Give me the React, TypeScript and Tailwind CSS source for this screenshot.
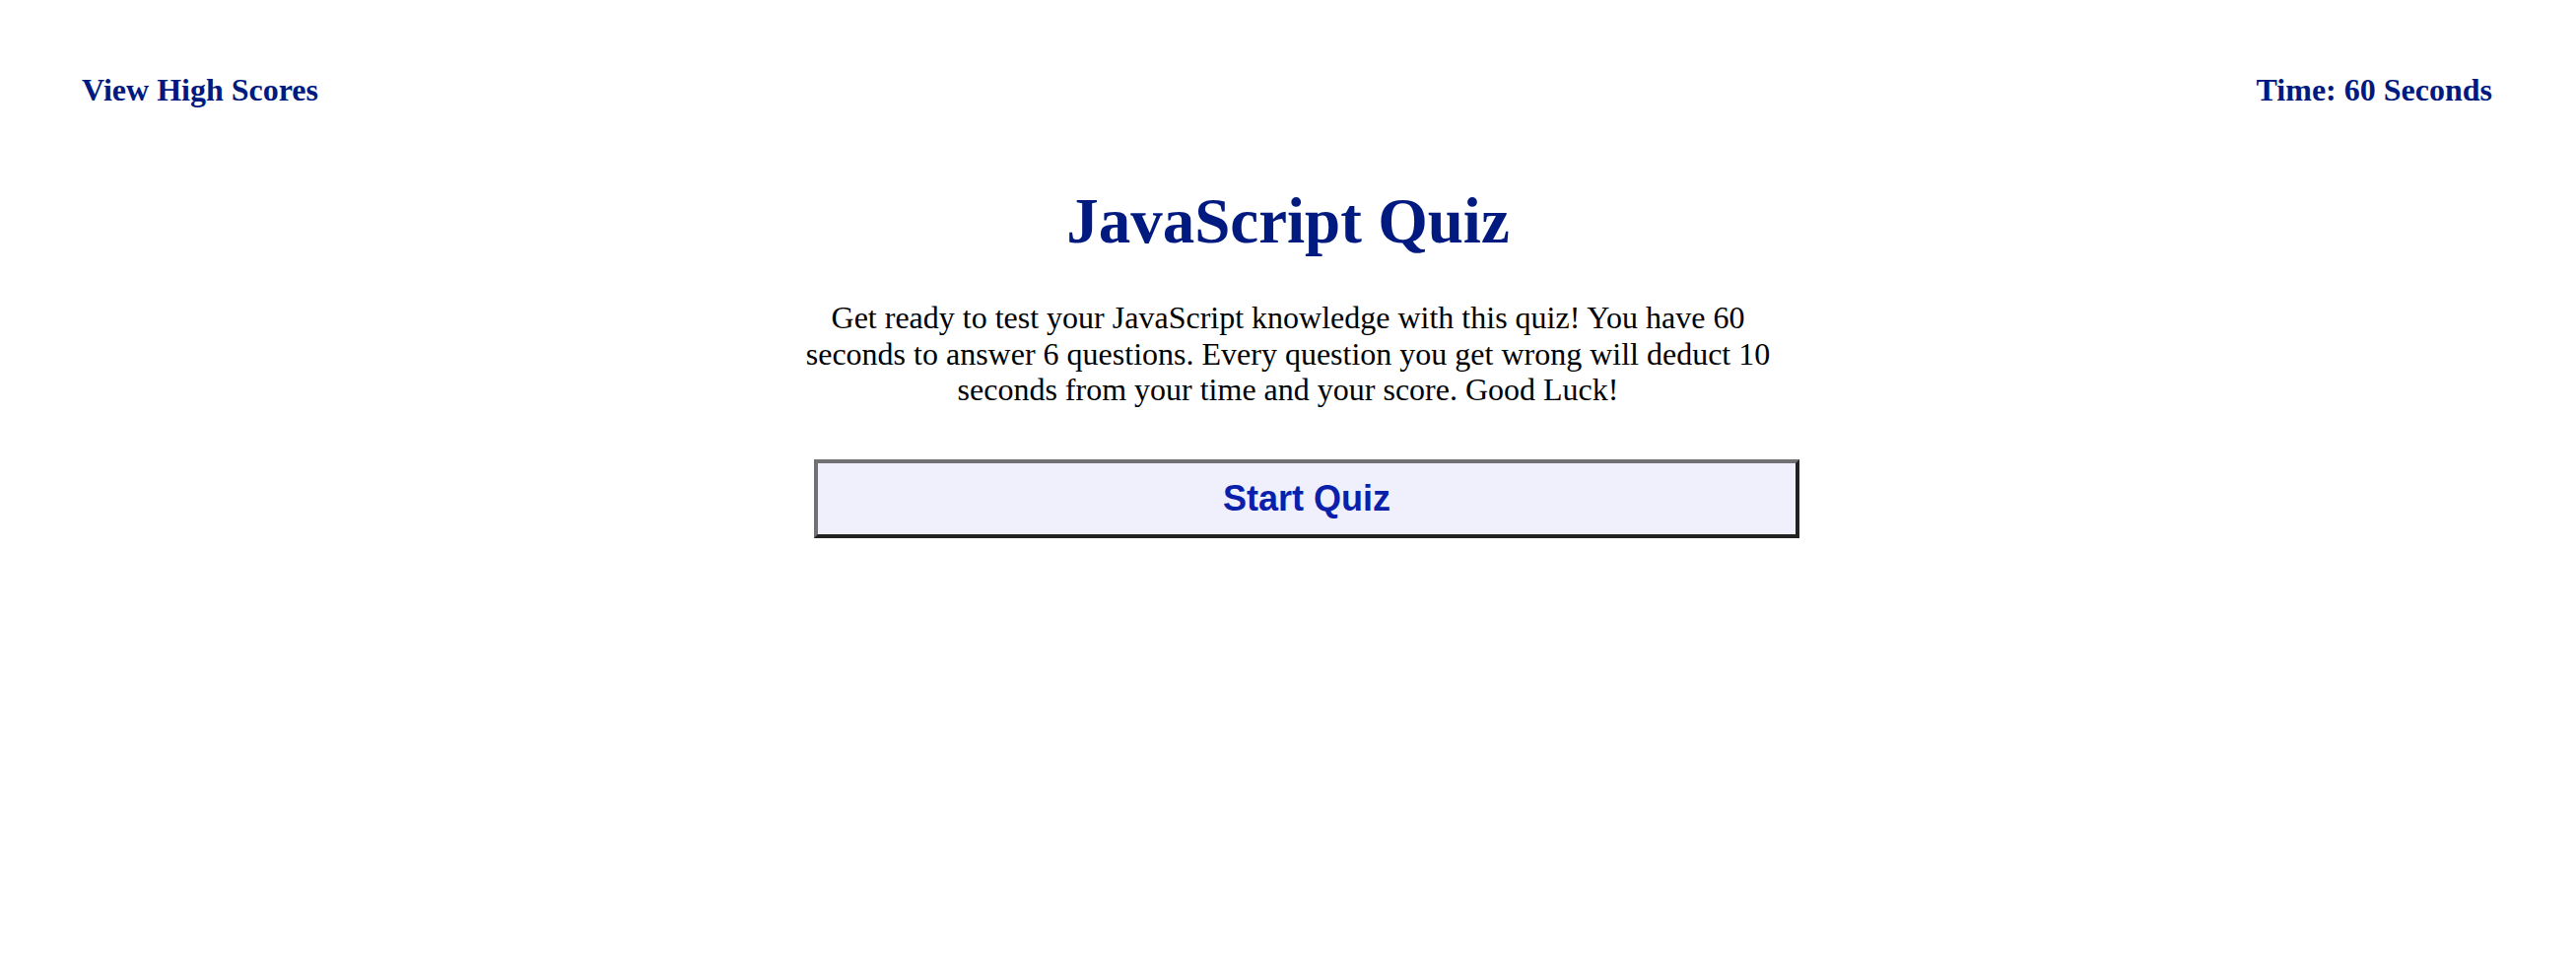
import React from "react";

export default function App() {
  return (
    <div className="min-h-screen bg-white text-black" style={{ fontFamily: '"Liberation Serif", "Times New Roman", serif' }}>
      <header className="flex justify-between pl-[83px] pr-[85px] pt-[73px]">
        <a className="text-[32px] leading-[36px] font-bold text-[#001a80] cursor-pointer">View High Scores</a>
        <div className="text-[32px] leading-[36px] font-bold text-[#001a80]">Time: 60 Seconds</div>
      </header>
      <main className="w-[1000px] mx-auto flex flex-col items-start">
        <h1 className="w-full text-center text-[65px] leading-[74px] font-bold text-[#001a80] mt-[78px]">JavaScript Quiz</h1>
        <p className="w-full text-center text-[32px] leading-[36.5px] mt-[43px]">
          Get ready to test your JavaScript knowledge with this quiz! You have 60 seconds to answer 6 questions. Every question you get wrong will deduct 10 seconds from your time and your score. Good Luck!
        </p>
        <button
          className="mt-[52px] ml-[19px] shrink-0 w-[1000px] h-[80px] bg-[#f0f0fc] border-4 border-t-[#717171] border-l-[#717171] border-b-[#222222] border-r-[#222222] text-[36px] font-bold text-[#0a20ab] flex items-center justify-center"
          style={{ fontFamily: '"Liberation Sans", Arial, sans-serif' }}
        >
          Start Quiz
        </button>
      </main>
    </div>
  );
}
